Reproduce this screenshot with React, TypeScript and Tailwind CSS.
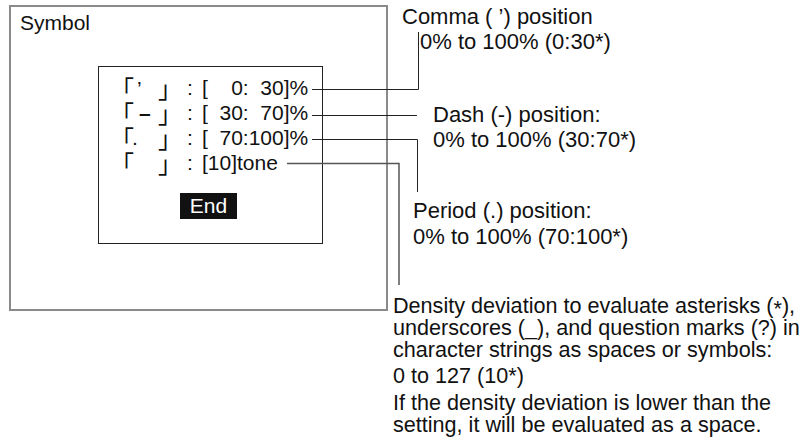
import React from 'react';

interface Row {
  mark: React.ReactNode;
  value: React.ReactNode;
}

const Range = ({ from, to }: { from: string; to: string }) => (
  <span className="flex">
    <span>[</span>
    <span className="w-[35px] text-right">{from}</span>
    <span>:</span>
    <span className="w-[35px] text-right">{to}</span>
    <span>]%</span>
  </span>
);

const rows: Row[] = [
  { mark: <span className="pl-[3px] leading-none self-start mt-[3px]">’</span>, value: <Range from="0" to="30" /> },
  { mark: <span className="pl-[5px] font-bold">–</span>, value: <Range from="30" to="70" /> },
  { mark: <span className="-ml-[2px]">.</span>, value: <Range from="70" to="100" /> },
  { mark: <span />, value: <span>[10]tone</span> },
];

const cjk = "font-['Noto_Sans_CJK_JP',sans-serif] text-[24px] leading-[25px]";

export default function App() {
  return (
    <div className="relative w-[804px] h-[441px] bg-white text-[#111] font-['Liberation_Sans',Arial,sans-serif] flex">
      {/* screen */}
      <div className="ml-[9px] mt-[5px] w-[379px] h-[306px] border-2 border-[#8a8a8a] shrink-0">
        <div className="pl-[9px] pt-[4px] text-[21px] leading-[24px]">Symbol</div>
        <div className="ml-[87px] mt-[31px] w-[225px] h-[178px] border border-[#222] pl-[11px] pt-[8px] text-[21px]">
          {rows.map((r, i) => (
            <div key={i} className="flex h-[25px] items-center">
              <span className="flex w-[77px] h-[25px] items-center">
                <span className={`${cjk} w-[24px] shrink-0`}>「</span>
                <span className="flex w-[24px] h-[25px] items-center shrink-0">{r.mark}</span>
                <span className={`${cjk} w-[24px] shrink-0`}>」</span>
              </span>
              <span className="w-[15px]">:</span>
              {r.value}
            </div>
          ))}
          <div className="flex justify-center mt-[18px] pr-[15px]">
            <span className="bg-[#111] text-white px-[10px] h-[26px] leading-[26px]">End</span>
          </div>
        </div>
      </div>

      {/* notes */}
      <div className="ml-[5px] text-[22px] whitespace-nowrap">
        <div className="mt-[4px] leading-[25px]">
          <div className="pl-[9px]">Comma ( ’) position</div>
          <div className="pl-[27px]">0% to 100% (0:30*)</div>
        </div>
        <div className="mt-[48px] leading-[25px] pl-[40px]">
          <div>Dash (-) position:</div>
          <div>0% to 100% (30:70*)</div>
        </div>
        <div className="mt-[46px] leading-[26px] pl-[20px]">
          <div>Period (.) position:</div>
          <div>0% to 100% (70:100*)</div>
        </div>
        <div className="mt-[45px] leading-[22px] text-[21.6px]">
          <p>
            Density deviation to evaluate asterisks (<span className="relative top-[3px]">*</span>),
            <br />
            underscores (_), and question marks (?) in
            <br />
            character strings as spaces or symbols:
          </p>
          <p className="mt-[4px]">0 to 127 (10*)</p>
          <p className="mt-[5px]">
            If the density deviation is lower than the
            <br />
            setting, it will be evaluated as a space.
          </p>
        </div>
      </div>

      {/* leader lines */}
      <svg className="absolute inset-0 pointer-events-none" width="804" height="441" fill="none">
        <path d="M312 89.5H418.5V32" stroke="#222" strokeWidth="1" />
        <path d="M312 115.5H417" stroke="#222" strokeWidth="1" />
        <path d="M312 139.5H417.5V192" stroke="#222" strokeWidth="1" />
        <path d="M287 163.5H399V285" stroke="#555" strokeWidth="1.5" />
      </svg>
    </div>
  );
}
